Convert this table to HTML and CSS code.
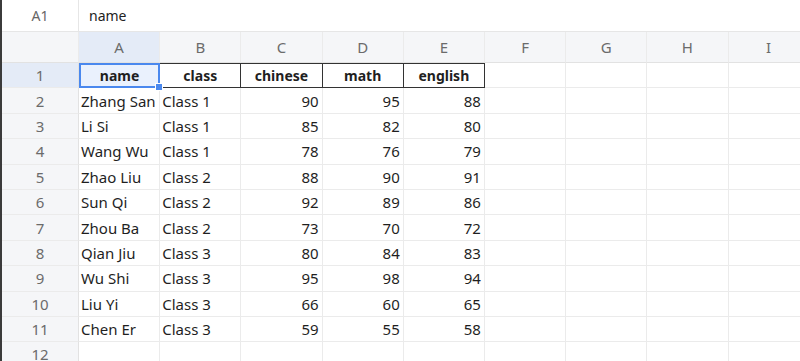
FILE: index.html
```html
<!DOCTYPE html>
<html>
<head>
<meta charset="utf-8">
<link rel="stylesheet" href="styles.css">
</head>
<body>
<div class="app">
  <div class="fbar">
    <div class="ref">A1</div>
    <div class="formula">name</div>
  </div>
  <div class="sheet">
    <div class="corner"></div>
    <div class="ch sel">A</div><div class="ch">B</div><div class="ch">C</div><div class="ch">D</div><div class="ch">E</div><div class="ch">F</div><div class="ch">G</div><div class="ch">H</div><div class="ch">I</div>

    <div class="rh sel">1</div>
    <div class="c b hd active">name<span class="handle"></span></div><div class="c b hd">class</div><div class="c b hd">chinese</div><div class="c b hd">math</div><div class="c b hd last">english</div><div class="c"></div><div class="c"></div><div class="c"></div><div class="c"></div>

    <div class="rh">2</div><div class="c">Zhang San</div><div class="c">Class 1</div><div class="c n">90</div><div class="c n">95</div><div class="c n">88</div><div class="c"></div><div class="c"></div><div class="c"></div><div class="c"></div>
    <div class="rh">3</div><div class="c">Li Si</div><div class="c">Class 1</div><div class="c n">85</div><div class="c n">82</div><div class="c n">80</div><div class="c"></div><div class="c"></div><div class="c"></div><div class="c"></div>
    <div class="rh">4</div><div class="c">Wang Wu</div><div class="c">Class 1</div><div class="c n">78</div><div class="c n">76</div><div class="c n">79</div><div class="c"></div><div class="c"></div><div class="c"></div><div class="c"></div>
    <div class="rh">5</div><div class="c">Zhao Liu</div><div class="c">Class 2</div><div class="c n">88</div><div class="c n">90</div><div class="c n">91</div><div class="c"></div><div class="c"></div><div class="c"></div><div class="c"></div>
    <div class="rh">6</div><div class="c">Sun Qi</div><div class="c">Class 2</div><div class="c n">92</div><div class="c n">89</div><div class="c n">86</div><div class="c"></div><div class="c"></div><div class="c"></div><div class="c"></div>
    <div class="rh">7</div><div class="c">Zhou Ba</div><div class="c">Class 2</div><div class="c n">73</div><div class="c n">70</div><div class="c n">72</div><div class="c"></div><div class="c"></div><div class="c"></div><div class="c"></div>
    <div class="rh">8</div><div class="c">Qian Jiu</div><div class="c">Class 3</div><div class="c n">80</div><div class="c n">84</div><div class="c n">83</div><div class="c"></div><div class="c"></div><div class="c"></div><div class="c"></div>
    <div class="rh">9</div><div class="c">Wu Shi</div><div class="c">Class 3</div><div class="c n">95</div><div class="c n">98</div><div class="c n">94</div><div class="c"></div><div class="c"></div><div class="c"></div><div class="c"></div>
    <div class="rh">10</div><div class="c">Liu Yi</div><div class="c">Class 3</div><div class="c n">66</div><div class="c n">60</div><div class="c n">65</div><div class="c"></div><div class="c"></div><div class="c"></div><div class="c"></div>
    <div class="rh">11</div><div class="c">Chen Er</div><div class="c">Class 3</div><div class="c n">59</div><div class="c n">55</div><div class="c n">58</div><div class="c"></div><div class="c"></div><div class="c"></div><div class="c"></div>
    <div class="rh">12</div><div class="c"></div><div class="c"></div><div class="c"></div><div class="c"></div><div class="c"></div><div class="c"></div><div class="c"></div><div class="c"></div><div class="c"></div>
  </div>
</div>
</body>
</html>
```
FILE: styles.css
```css
* { box-sizing: border-box; }
html, body { margin: 0; padding: 0; }
body {
  width: 800px;
  height: 361px;
  overflow: hidden;
  background: #fff;
  font-family: "Noto Sans", "Open Sans", sans-serif;
  font-size: 15px;
  color: #1f1f1f;
}
.app {
  height: 361px;
  border-left: 2px solid #3b3b3b;
  overflow: hidden;
}
.fbar {
  display: flex;
  height: 32px;
  border-bottom: 1px solid #e6e6e6;
}
.ref {
  width: 77px;
  border-right: 1px solid #e6e6e6;
  display: flex;
  align-items: center;
  justify-content: center;
  color: #666;
  font-size: 14px;
}
.formula {
  display: flex;
  align-items: center;
  padding-left: 10px;
  color: #222;
  font-size: 14px;
}
.sheet {
  display: grid;
  grid-template-columns: 77px repeat(9, 81.2px);
  grid-template-rows: 31px repeat(12, 25.4px);
}
.corner, .ch {
  background: #f5f6f8;
  border-right: 1px solid #ebebeb;
  border-bottom: 1px solid #e2e2e2;
}
.ch {
  display: flex;
  align-items: center;
  justify-content: center;
  color: #6b6b6b;
  font-size: 15px;
}
.ch.sel { background: #e4ebf7; }
.rh {
  background: #f5f6f8;
  border-right: 1px solid #e2e2e2;
  border-bottom: 1px solid #ebebeb;
  display: flex;
  align-items: center;
  justify-content: center;
  color: #6b6b6b;
  font-size: 15px;
}
.rh.sel { background: #e4ebf7; }
.c {
  border-right: 1px solid #ebebeb;
  border-bottom: 1px solid #ebebeb;
  display: flex;
  align-items: center;
  padding: 0 2px;
  white-space: nowrap;
  overflow: visible;
  position: relative;
}
.c.n { justify-content: flex-end; padding-right: 3px; }
.c.b {
  font-weight: 700;
  font-size: 14px;
  justify-content: center;
}
.c.hd {
  border: 1px solid #333;
  margin-left: -1px;
}
.c.hd.active {
  border: 2px solid #4a88ee;
  background: #eaf1fd;
  margin-left: 0;
  z-index: 2;
}
.handle {
  position: absolute;
  right: -5px;
  bottom: -5px;
  width: 6px;
  height: 6px;
  background: #4a88ee;
  border: 1px solid #fff;
  box-sizing: content-box;
  z-index: 3;
}
```
